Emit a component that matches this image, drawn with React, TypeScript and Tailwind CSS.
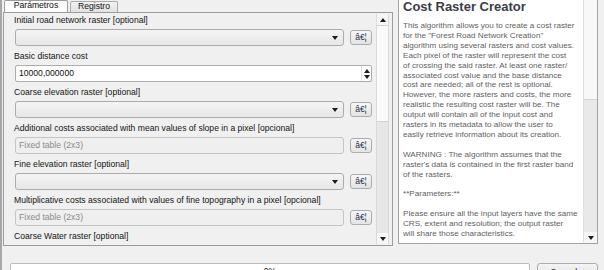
import React from 'react';

const helpParagraphs: string[][] = [
  [
    'This algorithm allows you to create a cost raster',
    'for the "Forest Road Network Creation"',
    'algorithm using several rasters and cost values.',
    'Each pixel of the raster will represent the cost',
    'of crossing the said raster. At least one raster/',
    'associated cost value and the base distance',
    'cost are needed; all of the rest is optional.',
    'However, the more rasters and costs, the more',
    'realistic the resulting cost raster will be. The',
    'output will contain all of the input cost and',
    'rasters in its metadata to allow the user to',
    'easily retrieve information about its creation.',
  ],
  [
    'WARNING : The algorithm assumes that the',
    "raster's data is contained in the first raster band",
    'of the rasters.',
  ],
  ['**Parameters:**'],
  [
    'Please ensure all the input layers have the same',
    'CRS, extent and resolution; the output raster',
    'will share those characteristics.',
  ],
];

type Field =
  | { label: string; kind: 'combo' }
  | { label: string; kind: 'spin'; value: string }
  | { label: string; kind: 'table' };

const fields: Field[] = [
  { label: 'Initial road network raster [optional]', kind: 'combo' },
  { label: 'Basic distance cost', kind: 'spin', value: '10000,000000' },
  { label: 'Coarse elevation raster [optional]', kind: 'combo' },
  { label: 'Additional costs associated with mean values of slope in a pixel [opcional]', kind: 'table' },
  { label: 'Fine elevation raster [optional]', kind: 'combo' },
  { label: 'Multiplicative costs associated with values of fine topography in a pixel [opcional]', kind: 'table' },
  { label: 'Coarse Water raster [optional]', kind: 'combo' },
];

const Caret = ({ up = false }: { up?: boolean }) => (
  <svg width="6" height="4" viewBox="0 0 6 4" className="block">
    <polygon points={up ? '0,4 6,4 3,0' : '0,0 6,0 3,4'} fill="#1c1c1c" />
  </svg>
);

const DotsButton = () => (
  <div className="ml-[6px] h-[15px] w-[22px] mt-[1px] flex items-center justify-center rounded-[3px] border border-[#acacac] bg-linear-to-b from-[#f7f7f7] to-[#e3e3e3] text-[8.5px] leading-none text-[#243049]">
    â€¦
  </div>
);

const FieldRow = ({ field }: { field: Field }) => (
  <div className="mb-[4px]">
    <div className="h-[12px] leading-[12px] text-[8.6px] text-[#141414] whitespace-nowrap">{field.label}</div>
    <div className="mt-[3px] flex h-[17px] pl-[1px]">
      {field.kind === 'combo' && (
        <>
          <div className="flex w-[329px] items-center justify-end rounded-[3px] border border-[#acacac] bg-linear-to-b from-[#f4f4f4] to-[#e7e7e7] pr-[5px]">
            <Caret />
          </div>
          <DotsButton />
        </>
      )}
      {field.kind === 'table' && (
        <>
          <div className="flex w-[329px] items-center rounded-[3px] border border-[#c4c4c4] bg-[#efefef] pl-[3px] text-[8.6px] text-[#8b8b8b]">
            Fixed table (2x3)
          </div>
          <DotsButton />
        </>
      )}
      {field.kind === 'spin' && (
        <div className="flex w-[357px] items-center rounded-[2px] border border-[#adadad] bg-white pl-[3px] text-[8.6px] text-[#111]">
          <span className="flex-1">{field.value}</span>
          <div className="flex h-full w-[10px] flex-col items-center justify-center gap-[2px] border-l border-[#e2e2e2]">
            <Caret up />
            <Caret />
          </div>
        </div>
      )}
    </div>
  </div>
);

export default function App() {
  return (
    <div className="h-[270px] w-[604px] overflow-hidden border-l-2 border-[#a6a6a6] bg-[#f0f0f0] font-['Liberation_Sans',Arial,sans-serif]">
      <div className="flex h-[246px]">
        {/* left: tabs + parameters */}
        <div className="ml-[1px] flex w-[390px] flex-col">
          <div className="flex h-[12px] items-end pl-[1px]">
            <div className="flex h-[12px] w-[64px] justify-center rounded-t-[2px] border border-b-0 border-[#9c9c9c] bg-[#fbfbfb] text-[8.6px] leading-[8px] text-[#111]">
              Parámetros
            </div>
            <div className="ml-[2px] flex h-[11px] w-[48px] justify-center rounded-t-[2px] border border-b-0 border-[#a8a8a8] bg-linear-to-b from-[#f2f2f2] to-[#e2e2e2] text-[8.6px] leading-[9px] text-[#111]">
              Registro
            </div>
          </div>
          <div className="flex flex-1 overflow-hidden border border-[#9c9c9c] bg-[#f0f0f0] pb-[1px] pl-[2px] pr-[3px] pt-[1px]">
            <div className="flex-1 overflow-hidden pl-[8px]">
              {fields.map((f) => (
                <FieldRow key={f.label} field={f} />
              ))}
            </div>
            <div className="flex w-[13px] flex-col border-x border-[#dadada] bg-[#e6e6e6]">
              <div className="flex h-[11px] items-center justify-center bg-[#f6f6f6]">
                <Caret up />
              </div>
              <div className="h-[97px] border-y border-[#d2d2d2] bg-[#fafafa]" />
              <div className="flex-1" />
              <div className="flex h-[11px] items-center justify-center bg-[#f6f6f6]">
                <Caret />
              </div>
            </div>
          </div>
        </div>

        {/* right: help text */}
        <div className="ml-[5px] flex h-[244px] w-[200px] border border-t-0 border-[#a3a3a3] bg-white">
          <div className="flex-1 overflow-hidden pl-[4px]">
            <div className="text-[13px] font-bold leading-[14px] text-[#3b3d47] whitespace-nowrap">Cost Raster Creator</div>
            <div className="mt-[7px] text-[8.1px] leading-[9.9px] text-[#616161]">
              {helpParagraphs.map((p, i) => (
                <div key={i} className={i > 0 ? 'mt-[9.9px]' : ''}>
                  {p.map((line) => (
                    <div key={line} className="whitespace-nowrap">{line}</div>
                  ))}
                </div>
              ))}
            </div>
          </div>
          <div className="flex w-[14px] flex-col border-l border-[#e0e0e0] bg-[#e9e9e9]">
            <div className="h-[100px] border-b border-[#d4d4d4] bg-[#f8f8f8]" />
            <div className="flex-1" />
            <div className="flex h-[11px] items-center justify-center bg-[#f6f6f6]">
              <Caret />
            </div>
          </div>
        </div>
      </div>

      {/* bottom: progress + cancel */}
      <div className="mt-[17px] flex pl-[8px]">
        <div className="h-[14px] w-[520px] rounded-[2px] border border-[#bcbcbc] bg-white pt-[2px] text-center text-[8.6px] leading-[10px] text-[#222]">
          0%
        </div>
        <div className="ml-[7px] h-[14px] w-[61px] rounded-[3px] border border-[#acacac] bg-linear-to-b from-[#f4f4f4] to-[#e4e4e4] pt-[3px] text-center text-[8.6px] leading-[10px] text-[#222]">
          Cancelar
        </div>
      </div>
    </div>
  );
}
